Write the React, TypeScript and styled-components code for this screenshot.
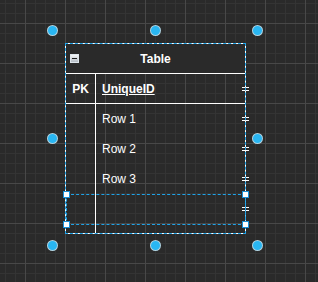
import styled, { createGlobalStyle } from "styled-components";

const GlobalStyle = createGlobalStyle`
  html, body {
    margin: 0;
    padding: 0;
    background: #2a2a2a;
  }
  body {
    font-family: "Liberation Sans", Arial, sans-serif;
  }
`;

const Canvas = styled.div`
  position: relative;
  width: 318px;
  height: 282px;
  overflow: hidden;
  background-color: #2a2a2a;
  background-image:
    linear-gradient(to right, #484848 1px, transparent 1px),
    linear-gradient(to bottom, #484848 1px, transparent 1px),
    linear-gradient(to right, #343434 1px, transparent 1px),
    linear-gradient(to bottom, #343434 1px, transparent 1px);
  background-size: 40px 40px, 40px 40px, 10px 10px, 10px 10px;
  background-position: 25px 23px;
`;

const TableNode = styled.div`
  position: absolute;
  left: 65px;
  top: 43px;
  width: 181px;
  height: 191px;
  box-sizing: border-box;
  border: 1px solid #ffffff;
  display: flex;
  flex-direction: column;
  color: #ffffff;
  font-size: 12px;
`;

const Header = styled.div`
  height: 29px;
  flex-shrink: 0;
  border-bottom: 1px solid #ffffff;
  background: #2a2a2a;
  display: grid;
  grid-template-columns: 1fr auto 1fr;
  align-items: center;
`;

const Collapse = styled.span`
  justify-self: start;
  margin-left: 4px;
  margin-top: -1px;
  width: 9px;
  height: 9px;
  box-sizing: border-box;
  border: 1px solid #dfe6ec;
  background: linear-gradient(#f4f6f8, #b4bcc4);
  display: flex;
  align-items: center;
  justify-content: center;

  &::after {
    content: "";
    width: 5px;
    height: 1px;
    background: #1e1e1e;
  }
`;

const Title = styled.span`
  font-weight: bold;
`;

const Body = styled.div`
  flex: 1;
  display: flex;
  flex-direction: column;
`;

const Row = styled.div<{ $divided?: boolean; $fill?: boolean; $h?: number }>`
  position: relative;
  display: grid;
  grid-template-columns: 30px 1fr;
  height: ${(p) => (p.$h ? `${p.$h}px` : "30px")};
  flex: ${(p) => (p.$fill ? 1 : "none")};
  box-sizing: border-box;
  border-bottom: ${(p) => (p.$divided ? "1px solid #ffffff" : "none")};
`;

const KeyCell = styled.div`
  box-sizing: border-box;
  border-right: 1px solid #ffffff;
  display: flex;
  align-items: center;
  justify-content: center;
  font-weight: bold;
`;

const FieldCell = styled.div<{ $key?: boolean }>`
  display: flex;
  align-items: center;
  padding-left: 6px;
  font-weight: ${(p) => (p.$key ? "bold" : "normal")};
  text-decoration: ${(p) => (p.$key ? "underline" : "none")};
  text-underline-offset: 1px;
`;

const Port = styled.span`
  position: absolute;
  right: -4px;
  top: 50%;
  margin-top: -2px;
  width: 7px;
  height: 4px;
  box-sizing: border-box;
  border-top: 1px solid #ffffff;
  border-bottom: 1px solid #ffffff;
`;

const SelectionFrame = styled.div<{ $x: number; $y: number; $w: number; $h: number }>`
  position: absolute;
  left: ${(p) => p.$x}px;
  top: ${(p) => p.$y}px;
  width: ${(p) => p.$w}px;
  height: ${(p) => p.$h}px;
  box-sizing: border-box;
  border: 1px dashed #1fa3e8;
  pointer-events: none;
`;

const Corner = styled.span<{ $x: number; $y: number }>`
  position: absolute;
  left: ${(p) => p.$x - 3}px;
  top: ${(p) => p.$y - 3}px;
  width: 7px;
  height: 7px;
  box-sizing: border-box;
  background: #ffffff;
  border: 1px solid #1a8fd6;
`;

const Dot = styled.span<{ $x: number; $y: number }>`
  position: absolute;
  left: ${(p) => p.$x - 5.5}px;
  top: ${(p) => p.$y - 5.5}px;
  width: 11px;
  height: 11px;
  box-sizing: border-box;
  border-radius: 50%;
  background: #29b6f2;
  border: 1px solid rgba(220, 220, 220, 0.75);
`;

const rows = ["Row 1", "Row 2", "Row 3", ""];

const dots: [number, number][] = [
  [52, 30],
  [155, 30],
  [257, 30],
  [52, 138],
  [257, 138],
  [52, 245],
  [155, 245],
  [257, 245],
];

const corners: [number, number][] = [
  [66, 194],
  [245, 194],
  [66, 224],
  [245, 224],
];

export default function App() {
  return (
    <>
      <GlobalStyle />
      <Canvas>
        <TableNode>
          <Header>
            <Collapse />
            <Title>Table</Title>
            <span />
          </Header>
          <Body>
            <Row $divided>
              <KeyCell>PK</KeyCell>
              <FieldCell $key>UniqueID</FieldCell>
              <Port />
            </Row>
            {rows.map((label, i) => (
              <Row key={i}>
                <KeyCell />
                <FieldCell>{label}</FieldCell>
                <Port />
              </Row>
            ))}
            <Row $fill $h={9}>
              <KeyCell />
              <FieldCell />
            </Row>
          </Body>
        </TableNode>

        <SelectionFrame $x={65} $y={43} $w={181} $h={191} />
        <SelectionFrame $x={66} $y={194} $w={180} $h={31} />
        {corners.map(([x, y], i) => (
          <Corner key={i} $x={x} $y={y} />
        ))}
        {dots.map(([x, y], i) => (
          <Dot key={i} $x={x} $y={y} />
        ))}
      </Canvas>
    </>
  );
}
